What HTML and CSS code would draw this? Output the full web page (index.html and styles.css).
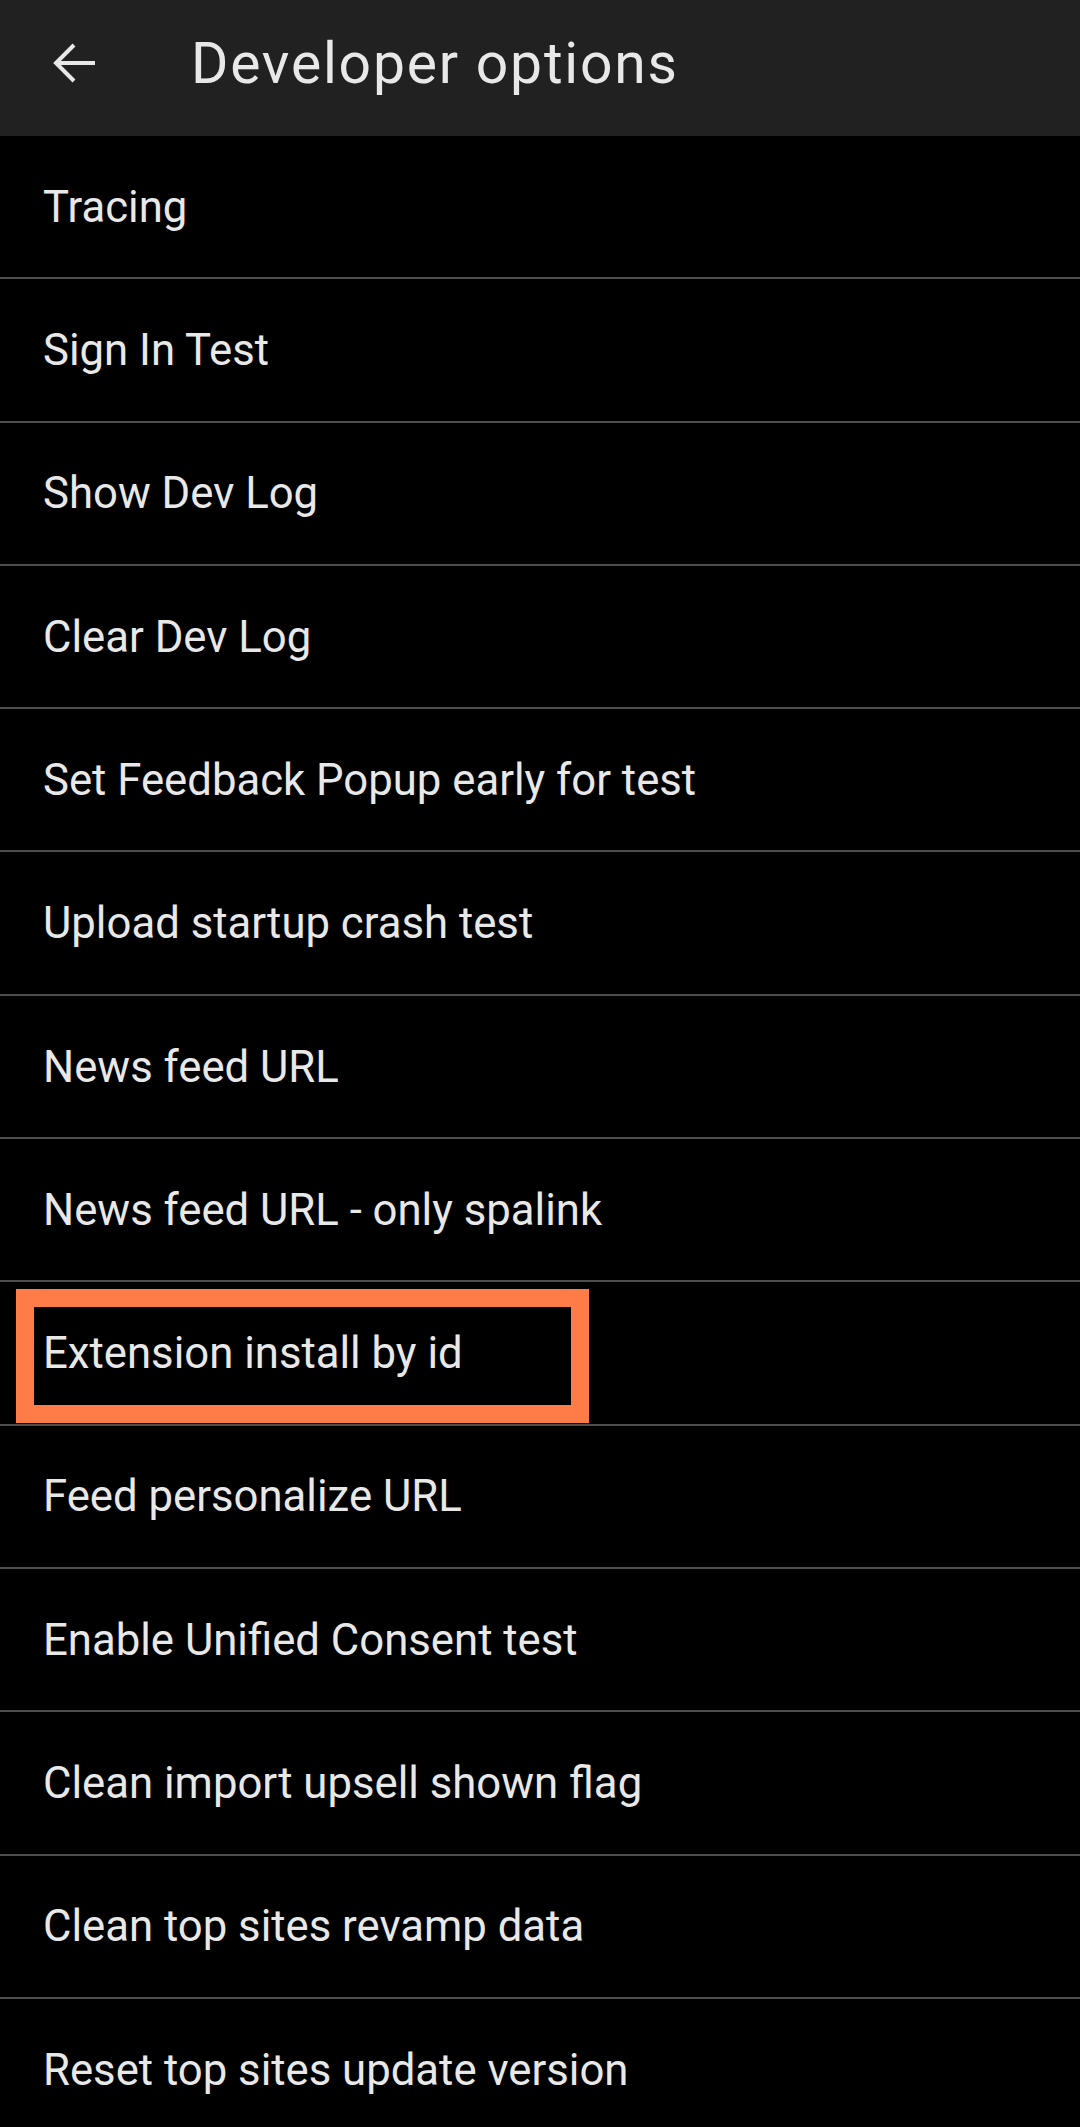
FILE: index.html
```html
<!DOCTYPE html>
<html>
<head>
<meta charset="utf-8">
<link rel="stylesheet" href="styles.css">
</head>
<body>
<header class="bar">
  <span class="back">
    <svg width="46" height="42" viewBox="0 0 46 42"><path d="M43 21H5M22 3L4 21l18 18" fill="none" stroke="#e8e8e8" stroke-width="4" stroke-linecap="butt" stroke-linejoin="miter"/></svg>
  </span>
  <h1 class="title">Developer options</h1>
</header>
<ul class="list">
  <li class="item">Tracing</li>
  <li class="item">Sign In Test</li>
  <li class="item">Show Dev Log</li>
  <li class="item">Clear Dev Log</li>
  <li class="item">Set Feedback Popup early for test</li>
  <li class="item">Upload startup crash test</li>
  <li class="item">News feed URL</li>
  <li class="item">News feed URL - only spalink</li>
  <li class="item highlighted"><span class="hl-box"></span>Extension install by id</li>
  <li class="item">Feed personalize URL</li>
  <li class="item">Enable Unified Consent test</li>
  <li class="item">Clean import upsell shown flag</li>
  <li class="item">Clean top sites revamp data</li>
  <li class="item">Reset top sites update version</li>
</ul>
</body>
</html>
```
FILE: styles.css
```css
html, body {
  margin: 0;
  padding: 0;
  background: #000;
}
body {
  width: 1080px;
  height: 2127px;
  overflow: hidden;
  font-family: Roboto, "Noto Sans", sans-serif;
  color: #e8e8e8;
}
.bar {
  height: 136px;
  background: #212121;
  display: flex;
  align-items: center;
  padding-bottom: 10px;
  box-sizing: border-box;
}
.back {
  width: 46px;
  height: 42px;
  margin-left: 52px;
  display: flex;
}
.title {
  margin: 0 0 0 93px;
  font-size: 57px;
  font-weight: 400;
  color: #e8e8e8;
  letter-spacing: 1.8px;
}
.list {
  list-style: none;
  margin: 0;
  padding: 0;
}
.item {
  position: relative;
  height: 143.3px;
  box-sizing: border-box;
  border-bottom: 2px solid #4e4e4e;
  display: flex;
  align-items: center;
  padding-left: 43px;
  padding-top: 2px;
  font-size: 43.7px;
  line-height: 1;
}
.hl-box {
  position: absolute;
  left: 16px;
  top: 7px;
  width: 573px;
  height: 134px;
  box-sizing: border-box;
  border: 18px solid #ff7b47;
}
```
